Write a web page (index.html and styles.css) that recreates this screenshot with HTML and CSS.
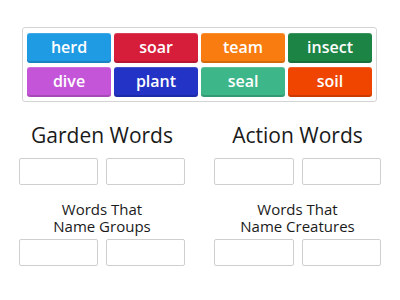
FILE: index.html
```html
<!DOCTYPE html>
<html lang="en">
<head>
    <meta charset="UTF-8">
    <title>Group Sort</title>
    <link rel="stylesheet" href="styles.css">
</head>
<body>
    <div class="tiles">
        <div class="tile blue">herd</div>
        <div class="tile red">soar</div>
        <div class="tile orange">team</div>
        <div class="tile green">insect</div>
        <div class="tile purple">dive</div>
        <div class="tile navy">plant</div>
        <div class="tile teal">seal</div>
        <div class="tile rust">soil</div>
    </div>

    <div class="groups">
        <div class="group">
            <h2>Garden Words</h2>
            <div class="slots">
                <div class="slot"></div>
                <div class="slot"></div>
            </div>
        </div>
        <div class="group">
            <h2>Action Words</h2>
            <div class="slots">
                <div class="slot"></div>
                <div class="slot"></div>
            </div>
        </div>
        <div class="group">
            <h3>Words That<br>Name Groups</h3>
            <div class="slots">
                <div class="slot"></div>
                <div class="slot"></div>
            </div>
        </div>
        <div class="group">
            <h3>Words That<br>Name Creatures</h3>
            <div class="slots">
                <div class="slot"></div>
                <div class="slot"></div>
            </div>
        </div>
    </div>
</body>
</html>
```

FILE: styles.css
```css
body {
    margin: 0;
    font-family: "Open Sans", sans-serif;
    background: #fff;
    color: #1a1a1a;
}
.tiles {
    display: grid;
    grid-template-columns: repeat(4, 1fr);
    gap: 4px 3px;
    width: 345px;
    margin: 27px 0 0 22px;
    padding: 5px 4px 4px 4px;
    border: 1px solid #d4d4d4;
    border-radius: 3px;
}
.tile {
    height: 30px;
    line-height: 29px;
    text-align: center;
    color: #fff;
    font-size: 16px;
    font-weight: 600;
    border-radius: 3px;
    box-shadow: inset 0 -2px 0 rgba(0, 0, 0, 0.15), inset 0 1px 0 rgba(255, 255, 255, 0.15);
}
.blue { background: #1f9be3; }
.red { background: #d61d3a; }
.orange { background: #f87c10; }
.green { background: #1c8444; }
.purple { background: #c555d8; }
.navy { background: #2233c6; }
.teal { background: #3db689; }
.rust { background: #ef4500; }

.groups {
    display: grid;
    grid-template-columns: 166px 167px;
    column-gap: 29px;
    margin: 19px 0 0 19px;
}
.group h2 {
    margin: 0 0 9px;
    font-size: 21px;
    font-weight: 400;
    line-height: 28px;
    text-align: center;
}
.group h3 {
    margin: 16px 0 4px;
    font-size: 15px;
    font-weight: 400;
    line-height: 17px;
    text-align: center;
}
.slots {
    display: grid;
    grid-template-columns: 1fr 1fr;
    gap: 8px;
}
.slot {
    height: 25px;
    border: 1px solid #cfcfcf;
    border-radius: 2px;
}
```
